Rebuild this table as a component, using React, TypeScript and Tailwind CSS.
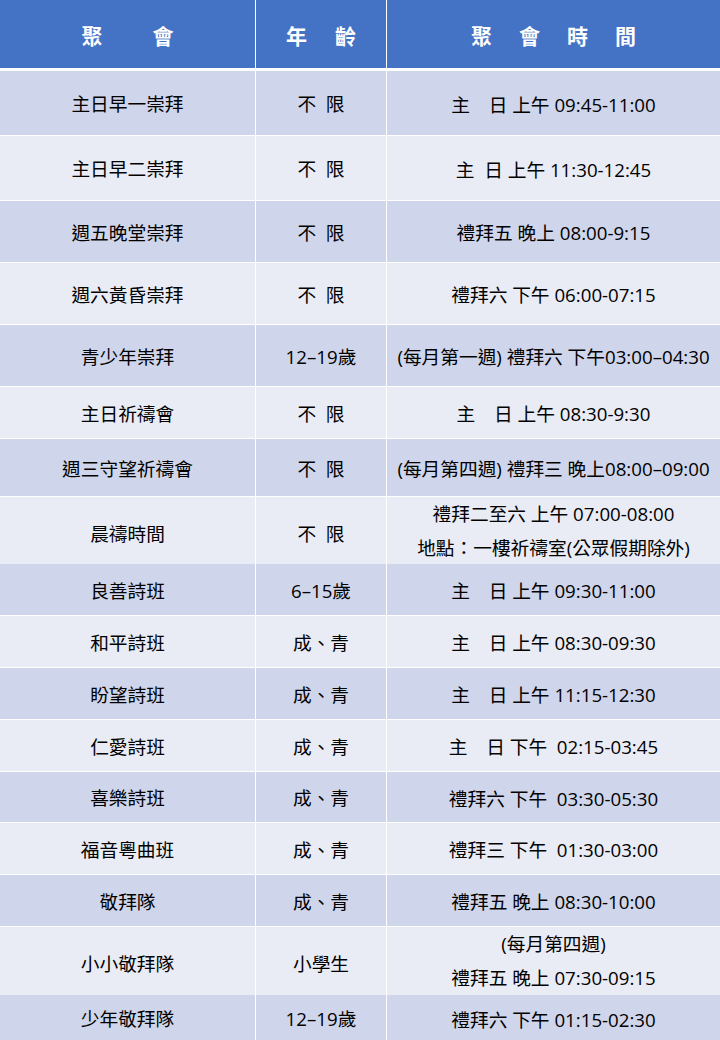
type Row = {
  name: string;
  age: string;
  time: string[];
  h: number;
};

const ROWS: Row[] = [
  { name: '主日早一崇拜', age: '不  限', time: ['主　日 上午 09:45-11:00'], h: 64 },
  { name: '主日早二崇拜', age: '不  限', time: ['主  日 上午 11:30-12:45'], h: 64 },
  { name: '週五晚堂崇拜', age: '不  限', time: ['禮拜五 晚上 08:00-9:15'], h: 61 },
  { name: '週六黃昏崇拜', age: '不  限', time: ['禮拜六 下午 06:00-07:15'], h: 61 },
  { name: '青少年崇拜', age: '12–19歲', time: ['(每月第一週) 禮拜六 下午03:00–04:30'], h: 61 },
  { name: '主日祈禱會', age: '不  限', time: ['主　日 上午 08:30-9:30'], h: 51 },
  { name: '週三守望祈禱會', age: '不  限', time: ['(每月第四週) 禮拜三 晚上08:00–09:00'], h: 57 },
  {
    name: '晨禱時間',
    age: '不  限',
    time: ['禮拜二至六 上午 07:00-08:00', '地點：一樓祈禱室(公眾假期除外)'],
    h: 66,
  },
  { name: '良善詩班', age: '6–15歲', time: ['主　日 上午 09:30-11:00'], h: 51 },
  { name: '和平詩班', age: '成、青', time: ['主　日 上午 08:30-09:30'], h: 51 },
  { name: '盼望詩班', age: '成、青', time: ['主　日 上午 11:15-12:30'], h: 51 },
  { name: '仁愛詩班', age: '成、青', time: ['主　日 下午  02:15-03:45'], h: 51 },
  { name: '喜樂詩班', age: '成、青', time: ['禮拜六 下午  03:30-05:30'], h: 50 },
  { name: '福音粵曲班', age: '成、青', time: ['禮拜三 下午  01:30-03:00'], h: 51 },
  { name: '敬拜隊', age: '成、青', time: ['禮拜五 晚上 08:30-10:00'], h: 51 },
  { name: '小小敬拜隊', age: '小學生', time: ['(每月第四週)', '禮拜五 晚上 07:30-09:15'], h: 67 },
  { name: '少年敬拜隊', age: '12–19歲', time: ['禮拜六 下午 01:15-02:30'], h: 46 },
];

function HeaderCell({ chars, gap }: { chars: string[]; gap: string }) {
  return (
    <div className={`flex items-center justify-center pt-[6px] bg-[#4472c4] ${gap}`}>
      {chars.map((c) => (
        <span key={c}>{c}</span>
      ))}
    </div>
  );
}

export default function App() {
  return (
    <div className="w-[720px] bg-white font-['Open_Sans','Noto_Sans_CJK_TC',sans-serif] text-black">
      <div className="grid h-[68px] grid-cols-[255px_130px_333px] gap-x-px text-[21px] font-bold text-white">
        <HeaderCell chars={['聚', '會']} gap="gap-[50px]" />
        <HeaderCell chars={['年', '齡']} gap="gap-[28px]" />
        <HeaderCell chars={['聚', '會', '時', '間']} gap="gap-[27px]" />
      </div>
      <div className="mt-[3px] flex flex-col gap-px">
        {ROWS.map((row, i) => {
          const bg = i % 2 === 0 ? 'bg-[#cfd5ea]' : 'bg-[#e9ebf5]';
          const multi = row.time.length > 1;
          return (
            <div
              key={row.name}
              className="grid grid-cols-[255px_130px_333px] gap-x-px text-[18.7px]"
              style={{ height: row.h }}
            >
              <div className={`flex items-center justify-center pt-[3px] ${bg}`}>{row.name}</div>
              <div className={`flex items-center justify-center whitespace-pre pt-[3px] ${bg}`}>
                {row.age}
              </div>
              <div
                className={`flex flex-col items-center justify-center whitespace-pre leading-[34px] ${
                  multi ? 'pb-[3px]' : 'pt-[3px]'
                } ${bg}`}
              >
                {row.time.map((t) => (
                  <span key={t}>{t}</span>
                ))}
              </div>
            </div>
          );
        })}
      </div>
    </div>
  );
}
